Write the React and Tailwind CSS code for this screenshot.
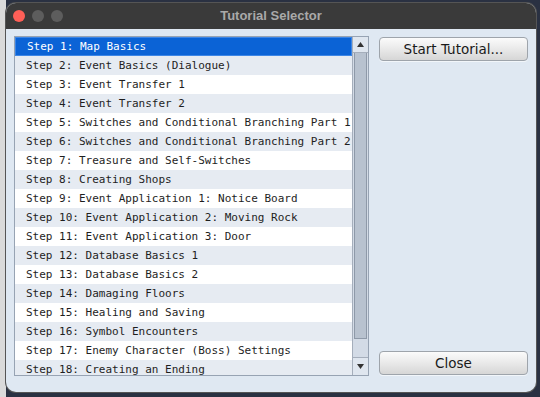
import React from "react";

const steps = [
  "Step 1: Map Basics",
  "Step 2: Event Basics (Dialogue)",
  "Step 3: Event Transfer 1",
  "Step 4: Event Transfer 2",
  "Step 5: Switches and Conditional Branching Part 1",
  "Step 6: Switches and Conditional Branching Part 2",
  "Step 7: Treasure and Self-Switches",
  "Step 8: Creating Shops",
  "Step 9: Event Application 1: Notice Board",
  "Step 10: Event Application 2: Moving Rock",
  "Step 11: Event Application 3: Door",
  "Step 12: Database Basics 1",
  "Step 13: Database Basics 2",
  "Step 14: Damaging Floors",
  "Step 15: Healing and Saving",
  "Step 16: Symbol Encounters",
  "Step 17: Enemy Character (Boss) Settings",
  "Step 18: Creating an Ending",
];

function Btn({ children }) {
  return (
    <button className="w-[149px] h-[24px] rounded-[4px] border border-[#9ea4ab] bg-[linear-gradient(to_bottom,#fbfbfb,#e9e9e9_50%,#d6d6d6)] text-[13.5px] text-[#1a1a1a] flex items-center justify-center shadow-[0_1px_0_rgba(255,255,255,0.6)] [font-family:'DejaVu_Sans',sans-serif]">
      {children}
    </button>
  );
}

export default function App() {
  return (
    <div className="w-[540px] h-[397px] overflow-hidden bg-[linear-gradient(to_right,#dadada_0_6px,#2a3142_6px)] pt-[3px] pl-[6px]">
      <div className="w-[530px] h-[389px] rounded-[10px] overflow-hidden bg-[#dfe8f2] flex flex-col shadow-[0_0_0_1px_#555]">
        <div className="h-[26px] bg-[#3a3a3a] flex items-center relative shrink-0">
          <div className="flex items-center gap-[7px] pl-[7px]">
            <div className="w-[12px] h-[12px] rounded-full bg-[#fe5f57]" />
            <div className="w-[12px] h-[12px] rounded-full bg-[#5d5d5d]" />
            <div className="w-[12px] h-[12px] rounded-full bg-[#5d5d5d]" />
          </div>
          <div className="absolute inset-0 flex items-center justify-center text-[13px] font-bold text-[#a9a9a9] [font-family:'Liberation_Sans',sans-serif]">
            Tutorial Selector
          </div>
        </div>
        <div className="flex px-[8px] pt-[7px] gap-[10px]">
          <div className="w-[355px] h-[340px] border border-[#97a3b3] bg-white flex">
            <div className="flex-1 overflow-hidden [font-family:'DejaVu_Sans_Mono',monospace] text-[11px] text-[#1e1e1e]">
              {steps.map((s, i) => (
                <div
                  key={i}
                  className={
                    i === 0
                      ? "h-[19px] flex items-center pt-[2px] pl-[11px] bg-[#0b63d6] text-white border border-[#3d86e6] whitespace-nowrap"
                      : i % 2 === 1
                      ? "h-[19px] flex items-center pt-[2px] pl-[11px] bg-[#e6ebf2] whitespace-nowrap"
                      : "h-[19px] flex items-center pt-[2px] pl-[11px] bg-white whitespace-nowrap"
                  }
                >
                  {s}
                </div>
              ))}
            </div>
            <div className="w-[16px] border-l border-[#a5aebb] bg-[#d3dbe6] flex flex-col">
              <div className="h-[16px] flex items-center justify-center bg-[#dfe6ef] border-b border-[#a5aebb]">
                <svg width="7" height="5" viewBox="0 0 7 5"><path d="M3.5 0 L7 5 L0 5 Z" fill="#333" /></svg>
              </div>
              <div className="h-[286px] mx-[1px] bg-[#b8c2cf] border-x border-b border-[#8e99a8]" />
              <div className="flex-1" />
              <div className="h-[18px] flex items-center justify-center bg-[#dfe6ef] border-t border-[#a5aebb]">
                <svg width="7" height="5" viewBox="0 0 7 5"><path d="M0 0 L7 0 L3.5 5 Z" fill="#333" /></svg>
              </div>
            </div>
          </div>
          <div className="flex flex-col justify-between h-[340px] pt-[1px] pb-[1px]">
            <Btn>Start Tutorial...</Btn>
            <Btn>Close</Btn>
          </div>
        </div>
      </div>
    </div>
  );
}
